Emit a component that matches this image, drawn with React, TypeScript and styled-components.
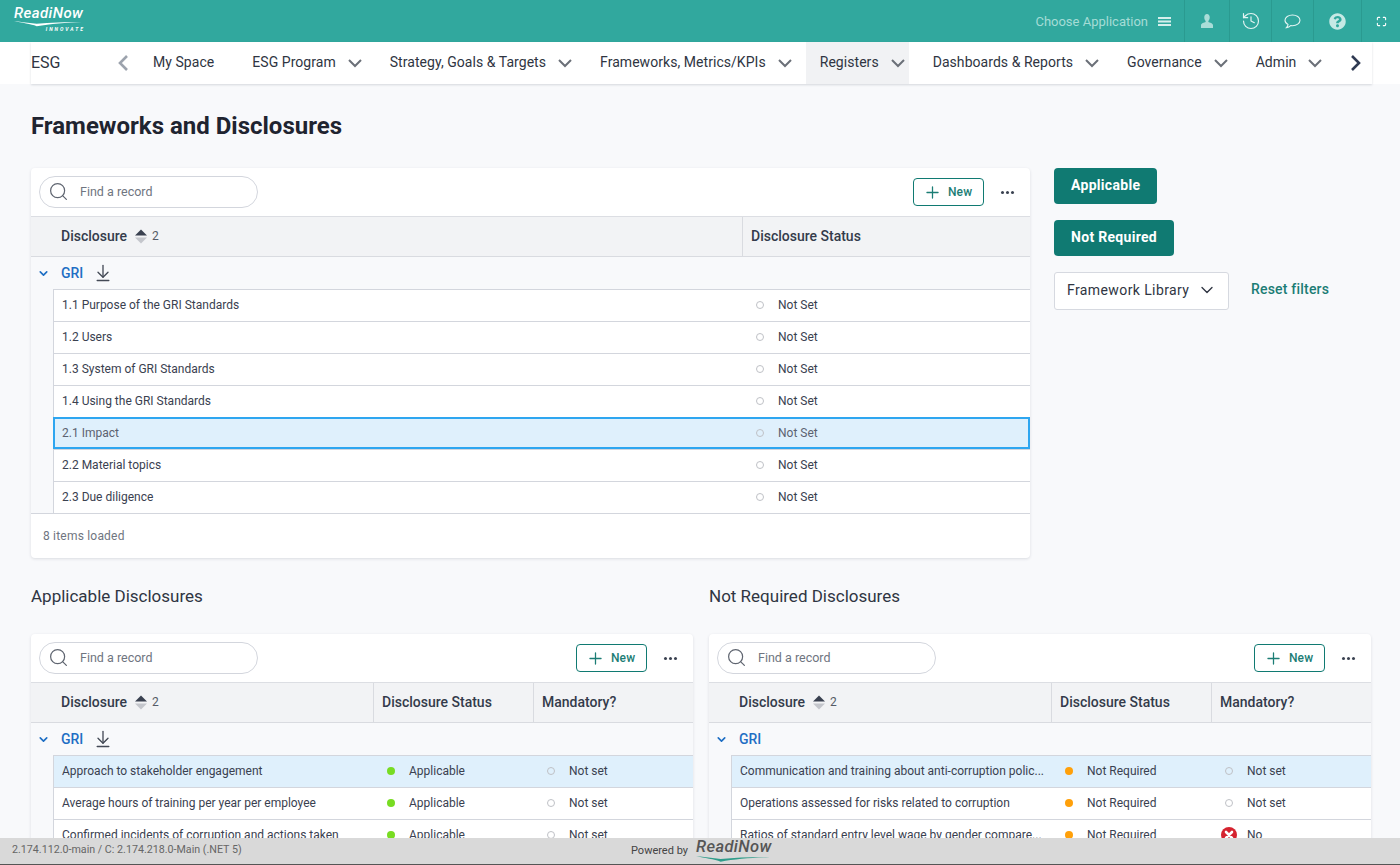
import React from "react";
import styled, { createGlobalStyle } from "styled-components";
import { ArrowDownToLine, ChevronDown, History, Maximize, Plus, Search } from "lucide-react";
import { FaQuestionCircle } from "react-icons/fa";

const GlobalStyle = createGlobalStyle`
  html, body {
    margin: 0;
    padding: 0;
    height: 100%;
    overflow: hidden;
    background: #f8f9fb;
    font-family: Roboto, "Liberation Sans", sans-serif;
    color: #2f3542;
  }
`;

const Page = styled.div`
  position: relative;
  width: 1400px;
  height: 865px;
  overflow: hidden;
`;

const TopBar = styled.header`
  display: flex;
  align-items: stretch;
  justify-content: space-between;
  height: 42px;
  background: #31a89e;
`;
const LogoBox = styled.div`
  display: flex;
  flex-direction: column;
  padding: 6px 0 0 14px;
  width: 71px;
  color: #fff;
`;
const LogoText = styled.span<{ $dark?: boolean }>`
  font-size: ${(p) => (p.$dark ? "16.5px" : "15px")};
  line-height: ${(p) => (p.$dark ? "18px" : "15px")};
  font-style: italic;
  font-weight: 500;
  letter-spacing: 0.4px;
  color: ${(p) => (p.$dark ? "#555" : "#fff")};
`;
const LogoSub = styled.span`
  align-self: flex-end;
  margin-top: -1px;
  font-size: 5px;
  line-height: 7px;
  font-weight: 700;
  font-style: italic;
  letter-spacing: 2px;
  white-space: nowrap;
`;
const TopRight = styled.div`
  display: flex;
  align-items: stretch;
`;
const ChooseApp = styled.div`
  display: flex;
  align-items: center;
  gap: 10px;
  padding-right: 13px;
  font-size: 13px;
  color: #a5dcd6;
`;
const TopIcon = styled.div<{ $w: number }>`
  display: flex;
  align-items: center;
  justify-content: center;
  box-sizing: border-box;
  width: ${(p) => p.$w}px;
  border-left: 1px solid #2a9a90;
  color: #c6e9e5;
`;

const NavOuter = styled.div`
  height: 42px;
  background: #fff;
  padding: 0 28px 0 31px;
`;
const Nav = styled.nav`
  display: flex;
  align-items: stretch;
  height: 42px;
  box-shadow: 0 1px 2px rgba(40, 50, 70, 0.16);
`;
const NavTitle = styled.div`
  display: flex;
  align-items: center;
  width: 84px;
  padding-bottom: 2px;
  box-sizing: border-box;
  font-size: 16px;
  color: #2f3542;
`;
const NavArrow = styled.div<{ $dark?: boolean }>`
  display: flex;
  align-items: center;
  width: ${(p) => (p.$dark ? "auto" : "24px")};
  margin-left: ${(p) => (p.$dark ? "auto" : "0")};
  padding: ${(p) => (p.$dark ? "0 11px 0 0" : "0 0 0 3px")};
  box-sizing: border-box;
  color: ${(p) => (p.$dark ? "#2f3a52" : "#9ca3ad")};
`;
const NavList = styled.div`
  display: flex;
  flex: none;
  gap: 10px;
`;
const NavItem = styled.div<{ $active?: boolean; $plain?: boolean }>`
  display: flex;
  align-items: center;
  flex: none;
  gap: 12px;
  padding: 0 ${(p) => (p.$plain ? "14px" : "4px")} 2px 14px;
  font-size: 14px;
  letter-spacing: 0.05px;
  white-space: nowrap;
  color: #2f3542;
  background: ${(p) => (p.$active ? "#f1f2f4" : "transparent")};
  svg {
    color: #6b7078;
    margin-top: 2px;
  }
`;

const Content = styled.main`
  padding: 0 29px 0 31px;
`;
const Title = styled.h1`
  margin: 0;
  padding-top: 28px;
  height: 84px;
  box-sizing: border-box;
  font-size: 24px;
  line-height: 28px;
  font-weight: 700;
  color: #1f2430;
`;
const TopRow = styled.div`
  display: flex;
  gap: 24px;
  align-items: flex-start;
`;
const Side = styled.aside`
  display: flex;
  flex-direction: column;
  align-items: flex-start;
  gap: 16px;
`;
const ActionButton = styled.button`
  height: 36px;
  padding: 0 17px 2px;
  border: 0;
  border-radius: 4px;
  background: #107a72;
  color: #fff;
  font: 700 14px Roboto, sans-serif;
  letter-spacing: 0.3px;
`;
const FilterRow = styled.div`
  display: flex;
  align-items: center;
  gap: 22px;
`;
const Dropdown = styled.div`
  display: flex;
  align-items: center;
  justify-content: space-between;
  box-sizing: border-box;
  width: 175px;
  height: 38px;
  padding: 0 11px 2px 12px;
  background: #fff;
  border: 1px solid #d6d9e0;
  border-radius: 3px;
  font-size: 14px;
  letter-spacing: 0.4px;
  color: #2f3542;
`;
const ResetLink = styled.span`
  margin-top: -5px;
  font-size: 14px;
  font-weight: 500;
  letter-spacing: 0.2px;
  color: #1c7d75;
`;

const Card = styled.section<{ $width: number }>`
  width: ${(p) => p.$width}px;
  flex: none;
  background: #fff;
  border-radius: 4px;
  box-shadow: 0 1px 3px rgba(40, 50, 70, 0.14);
  overflow: hidden;
`;
const Toolbar = styled.div`
  display: flex;
  align-items: center;
  height: 48px;
  padding: 0 15px 0 8px;
  border-bottom: 1px solid #dcdee3;
`;
const SearchBox = styled.div`
  display: flex;
  align-items: center;
  gap: 11px;
  box-sizing: border-box;
  width: 219px;
  height: 32px;
  padding: 0 0 1px 8px;
  border: 1px solid #d3d6dd;
  border-radius: 16px;
  font-size: 12.5px;
  color: #6f7580;
  svg {
    color: #5f6570;
  }
`;
const NewButton = styled.button`
  display: flex;
  align-items: center;
  gap: 6px;
  box-sizing: border-box;
  width: 71px;
  height: 28px;
  margin-left: auto;
  padding: 0 0 0 9px;
  background: #fff;
  border: 1px solid #107a72;
  border-radius: 4px;
  color: #1c7d75;
  font: 500 12px Roboto, sans-serif;
  letter-spacing: 0.1px;
`;
const More = styled.div`
  display: flex;
  gap: 2px;
  margin-left: 17px;
  width: 14px;
`;
const MoreDot = styled.i`
  width: 3px;
  height: 3px;
  border-radius: 50%;
  background: #3a4150;
`;
const Columns = styled.div<{ $cols: string }>`
  display: grid;
  grid-template-columns: ${(p) => p.$cols};
`;
const HeadRow = styled(Columns)`
  height: 40px;
  box-sizing: border-box;
  background: #f2f3f5;
  border-bottom: 1px solid #d9dbe0;
`;
const HeadCell = styled.div`
  display: flex;
  align-items: center;
  box-sizing: border-box;
  padding: 0 0 1px 8px;
  font-size: 14px;
  font-weight: 500;
  color: #343b4b;
  border-left: 1px solid #d9dbe0;
  &:first-child {
    padding-left: 30px;
    border-left: 0;
  }
`;
const SortCount = styled.span`
  display: flex;
  align-items: center;
  gap: 5px;
  margin-left: 8px;
  font-size: 12px;
  font-weight: 400;
  color: #555b66;
`;
const GroupRow = styled.div`
  display: flex;
  align-items: center;
  height: 32px;
  box-sizing: border-box;
  padding-left: 6px;
  background: #f8f9fb;
  color: #1f6fc4;
  font-size: 14px;
  font-weight: 500;
`;
const GroupName = styled.span`
  margin-left: 11px;
`;
const GroupDownload = styled.span`
  display: flex;
  margin-left: 10px;
  color: #444a56;
`;
const Rows = styled.div`
  background: #f8f9fb;
  padding-left: 22px;
`;
const Row = styled(Columns)<{ $selected?: boolean; $focused?: boolean }>`
  box-sizing: border-box;
  height: 32px;
  padding-bottom: 2px;
  background: ${(p) => (p.$focused || p.$selected ? "#dff0fc" : "#fff")};
  border-style: solid;
  border-color: #d3d6dd;
  border-width: 1px 0 0 1px;
  outline: ${(p) => (p.$focused ? "2px solid #2ea6f0" : "none")};
  outline-offset: -2px;
  color: ${(p) => (p.$focused ? "#5c6270" : "#3a4150")};
`;
const NameCell = styled.div`
  align-self: center;
  padding: 0 8px;
  font-size: 12px;
  white-space: nowrap;
`;
const StatusCell = styled.div`
  display: flex;
  align-items: center;
  gap: 14px;
  padding-left: 13px;
  font-size: 12px;
`;
const Dot = styled.span<{ $color?: string }>`
  box-sizing: border-box;
  flex: none;
  width: 8px;
  height: 8px;
  margin-top: 1px;
  border-radius: 50%;
  background: ${(p) => p.$color || "transparent"};
  border: ${(p) => (p.$color ? "0" : "1.5px solid #bfc1c6")};
`;
const IconSlot = styled.span`
  display: flex;
  justify-content: center;
  width: 8px;
`;
const CardFooter = styled.div`
  display: flex;
  align-items: center;
  height: 45px;
  box-sizing: border-box;
  border-top: 1px solid #d3d6dd;
  padding: 0 0 1px 12px;
  font-size: 12px;
  letter-spacing: 0.2px;
  color: #6f7580;
`;
const LowerGrid = styled.div`
  display: grid;
  grid-template-columns: 662px 662px;
  column-gap: 16px;
  margin-top: 28px;
`;
const SectionTitle = styled.h2`
  margin: 0;
  height: 48px;
  font-size: 17px;
  line-height: 20px;
  font-weight: 400;
  color: #2f3542;
`;
const Footer = styled.footer`
  position: absolute;
  left: 0;
  right: 0;
  bottom: 0;
  display: grid;
  grid-template-columns: 619px auto;
  align-items: center;
  box-sizing: border-box;
  height: 27px;
  padding-left: 12px;
  background: #d9d9d9;
  border-bottom: 1px solid #555;
  font-size: 10.7px;
  color: #666;
  z-index: 5;
`;
const Version = styled.span`
  margin-top: -3px;
`;
const Powered = styled.div`
  display: flex;
  align-items: flex-start;
  gap: 8px;
  color: #444;
`;
const PoweredLabel = styled.span`
  margin-top: 5px;
  font-size: 11px;
`;
const PoweredLogo = styled.div`
  display: flex;
  flex-direction: column;
  margin-top: -1px;
`;

const Swoosh = ({ color, width }: { color: string; width: number }) => (
  <svg width={width} height={width / 12} viewBox="0 0 72 6">
    <path d="M0 0 C8 2 18 3 24 5.5 C38 3 56 1.5 72 1 C54 1 38 1.5 24 3 C16 2 8 1 0 0Z" fill={color} />
  </svg>
);

const MenuIcon = () => (
  <svg width="13" height="9" viewBox="0 0 13 9" fill="#d6efec">
    <rect y="0" width="13" height="2" />
    <rect y="3.5" width="13" height="2" />
    <rect y="7" width="13" height="2" />
  </svg>
);

const UserIcon = () => (
  <svg width="12" height="14" viewBox="0 0 14 15" preserveAspectRatio="none" fill="#a9ddd8">
    <path d="M7 0c2 0 3.2 1.5 3.2 3.6 0 1.7-.8 3.2-1.6 3.9v1.2c1.6.6 5.4 1.3 5.4 3.3v3H0v-3c0-2 3.8-2.7 5.4-3.3V7.5C4.6 6.8 3.8 5.3 3.8 3.6 3.8 1.5 5 0 7 0z" />
  </svg>
);

const ChatIcon = () => (
  <svg width="17" height="15" viewBox="0 0 17 15" fill="none" stroke="#e2f4f2" strokeWidth="1.1">
    <path d="M8.5 1C4.4 1 1 3.3 1 6.3c0 1.8 1.2 3.3 3 4.3-.2 1.2-.8 2.3-1.5 3 1.7-.2 3.2-1 4.2-2 .6.1 1.2.1 1.8.1 4.1 0 7.5-2.4 7.5-5.4S12.6 1 8.5 1z" />
  </svg>
);

const SortIcon = () => (
  <svg width="12" height="15" viewBox="0 0 12 15">
    <path d="M6 0.5 L12 6.5 H0Z" fill="#3a4150" />
    <path d="M0 8.5 H12 L6 14.5Z" fill="#c4c6cc" />
  </svg>
);

const CrossIcon = () => (
  <svg width="16" height="16" viewBox="0 0 16 16" style={{ flex: "none" }}>
    <circle cx="8" cy="8" r="8" fill="#d5232f" />
    <path d="M5 5 L11 11 M11 5 L5 11" stroke="#fff" strokeWidth="2.6" strokeLinecap="round" />
  </svg>
);

const NavChevron = () => (
  <svg width="14" height="9" viewBox="0 0 14 9" fill="none" stroke="currentColor" strokeWidth="2">
    <path d="M1 1 L7 7 L13 1" />
  </svg>
);

const ArrowLeft = () => (
  <svg width="10" height="16" viewBox="0 0 10 16" fill="none" stroke="currentColor" strokeWidth="2.6">
    <path d="M9 1 L2 8 L9 15" />
  </svg>
);

const ArrowRight = () => (
  <svg width="10" height="16" viewBox="0 0 10 16" fill="none" stroke="currentColor" strokeWidth="2.6">
    <path d="M1 1 L8 8 L1 15" />
  </svg>
);

type Status = { text: string; color?: string; cross?: boolean };
type RowData = { name: string; state?: "selected" | "focused"; cells: Status[] };

interface GridCardProps {
  width: number;
  cols: string;
  rowCols: string;
  headers: string[];
  rows: RowData[];
  download?: boolean;
  footer?: string;
}

const NOT_SET: Status = { text: "Not Set" };
const not_set: Status = { text: "Not set" };
const APPLICABLE: Status = { text: "Applicable", color: "#78dc22" };
const NOT_REQUIRED: Status = { text: "Not Required", color: "#ffa00a" };

const GridCard: React.FC<GridCardProps> = ({ width, cols, rowCols, headers, rows, download, footer }) => (
  <Card $width={width}>
    <Toolbar>
      <SearchBox>
        <Search size={21} strokeWidth={1.4} />
        Find a record
      </SearchBox>
      <NewButton>
        <Plus size={19} strokeWidth={1.6} />
        New
      </NewButton>
      <More>
        <MoreDot />
        <MoreDot />
        <MoreDot />
      </More>
    </Toolbar>
    <HeadRow $cols={cols}>
      {headers.map((h, i) => (
        <HeadCell key={h}>
          {h}
          {i === 0 && (
            <SortCount>
              <SortIcon />2
            </SortCount>
          )}
        </HeadCell>
      ))}
    </HeadRow>
    <GroupRow>
      <ChevronDown size={13} strokeWidth={3} />
      <GroupName>GRI</GroupName>
      {download && (
        <GroupDownload>
          <ArrowDownToLine size={20} strokeWidth={1.6} />
        </GroupDownload>
      )}
    </GroupRow>
    <Rows>
      {rows.map((r) => (
        <Row
          key={r.name}
          $cols={rowCols}
          $selected={r.state === "selected"}
          $focused={r.state === "focused"}
        >
          <NameCell>{r.name}</NameCell>
          {r.cells.map((c, i) => (
            <StatusCell key={i}>
              {c.cross ? (
                <IconSlot>
                  <CrossIcon />
                </IconSlot>
              ) : (
                <Dot $color={c.color} />
              )}
              {c.text}
            </StatusCell>
          ))}
        </Row>
      ))}
    </Rows>
    {footer && <CardFooter>{footer}</CardFooter>}
  </Card>
);

const navItems = [
  { label: "My Space", plain: true },
  { label: "ESG Program" },
  { label: "Strategy, Goals & Targets" },
  { label: "Frameworks, Metrics/KPIs" },
  { label: "Registers", active: true },
  { label: "Dashboards & Reports" },
  { label: "Governance" },
  { label: "Admin" },
];

const topRows: RowData[] = [
  { name: "1.1 Purpose of the GRI Standards", cells: [NOT_SET] },
  { name: "1.2 Users", cells: [NOT_SET] },
  { name: "1.3 System of GRI Standards", cells: [NOT_SET] },
  { name: "1.4 Using the GRI Standards", cells: [NOT_SET] },
  { name: "2.1 Impact", state: "focused", cells: [NOT_SET] },
  { name: "2.2 Material topics", cells: [NOT_SET] },
  { name: "2.3 Due diligence", cells: [NOT_SET] },
];

const applicableRows: RowData[] = [
  { name: "Approach to stakeholder engagement", state: "selected", cells: [APPLICABLE, not_set] },
  { name: "Average hours of training per year per employee", cells: [APPLICABLE, not_set] },
  { name: "Confirmed incidents of corruption and actions taken", cells: [APPLICABLE, not_set] },
];

const notRequiredRows: RowData[] = [
  {
    name: "Communication and training about anti-corruption polic...",
    state: "selected",
    cells: [NOT_REQUIRED, not_set],
  },
  { name: "Operations assessed for risks related to corruption", cells: [NOT_REQUIRED, not_set] },
  {
    name: "Ratios of standard entry level wage by gender compare...",
    cells: [NOT_REQUIRED, { text: "No", cross: true }],
  },
];

const LOWER_COLS = "342px 160px 1fr";
const LOWER_ROW_COLS = "320px 160px 1fr";
const LOWER_HEADERS = ["Disclosure", "Disclosure Status", "Mandatory?"];

export default function App() {
  return (
    <Page>
      <GlobalStyle />
      <TopBar>
        <LogoBox>
          <LogoText>ReadiNow</LogoText>
          <Swoosh color="#fff" width={68} />
          <LogoSub>INNOVATE</LogoSub>
        </LogoBox>
        <TopRight>
          <ChooseApp>
            Choose Application
            <MenuIcon />
          </ChooseApp>
          <TopIcon $w={45}>
            <UserIcon />
          </TopIcon>
          <TopIcon $w={42}>
            <History size={20} strokeWidth={1.4} color="#e2f4f2" />
          </TopIcon>
          <TopIcon $w={42}>
            <ChatIcon />
          </TopIcon>
          <TopIcon $w={48}>
            <FaQuestionCircle size={17} color="#c6e9e5" />
          </TopIcon>
          <TopIcon $w={39}>
            <Maximize size={11} strokeWidth={2.4} color="#fff" />
          </TopIcon>
        </TopRight>
      </TopBar>
      <NavOuter>
        <Nav>
          <NavTitle>ESG</NavTitle>
          <NavArrow>
            <ArrowLeft />
          </NavArrow>
          <NavList>
            {navItems.map((n) => (
              <NavItem key={n.label} $active={n.active} $plain={n.plain}>
                {n.label}
                {!n.plain && <NavChevron />}
              </NavItem>
            ))}
          </NavList>
          <NavArrow $dark>
            <ArrowRight />
          </NavArrow>
        </Nav>
      </NavOuter>
      <Content>
        <Title>Frameworks and Disclosures</Title>
        <TopRow>
          <GridCard
            width={999}
            cols="711px 1fr"
            rowCols="689px 1fr"
            headers={["Disclosure", "Disclosure Status"]}
            rows={topRows}
            download
            footer="8 items loaded"
          />
          <Side>
            <ActionButton>Applicable</ActionButton>
            <ActionButton>Not Required</ActionButton>
            <FilterRow>
              <Dropdown>
                Framework Library
                <ChevronDown size={20} strokeWidth={1.6} />
              </Dropdown>
              <ResetLink>Reset filters</ResetLink>
            </FilterRow>
          </Side>
        </TopRow>
        <LowerGrid>
          <div>
            <SectionTitle>Applicable Disclosures</SectionTitle>
            <GridCard
              width={662}
              cols={LOWER_COLS}
              rowCols={LOWER_ROW_COLS}
              headers={LOWER_HEADERS}
              rows={applicableRows}
              download
            />
          </div>
          <div>
            <SectionTitle>Not Required Disclosures</SectionTitle>
            <GridCard
              width={662}
              cols={LOWER_COLS}
              rowCols={LOWER_ROW_COLS}
              headers={LOWER_HEADERS}
              rows={notRequiredRows}
            />
          </div>
        </LowerGrid>
      </Content>
      <Footer>
        <Version>2.174.112.0-main / C: 2.174.218.0-Main (.NET 5)</Version>
        <Powered>
          <PoweredLabel>Powered by</PoweredLabel>
          <PoweredLogo>
            <LogoText $dark>ReadiNow</LogoText>
            <Swoosh color="#2f9c8a" width={74} />
          </PoweredLogo>
        </Powered>
      </Footer>
    </Page>
  );
}
